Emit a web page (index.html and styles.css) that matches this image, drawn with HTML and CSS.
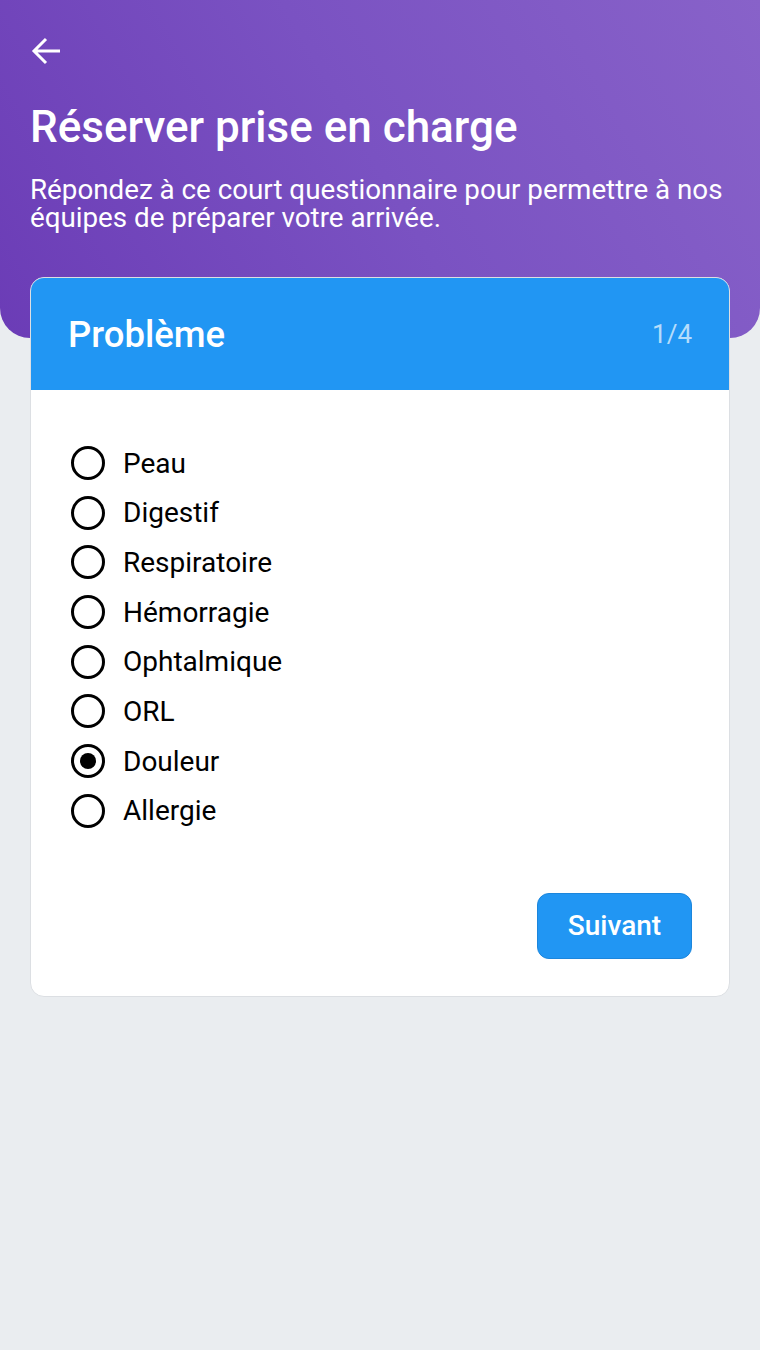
FILE: index.html
```html
<!DOCTYPE html>
<html lang="fr">

<head>
    <meta charset="UTF-8">
    <meta name="viewport" content="width=device-width, initial-scale=1.0">
    <title>Réserver prise en charge</title>
    <link rel="stylesheet" href="styles.css">
</head>

<body>
    <!-- En-tete violet -->
    <div class="hero">
        <button class="back" aria-label="Retour">
            <svg width="30" height="30" viewBox="0 0 30 30">
                <path d="M3 15H29M15 3L3 15L15 27" fill="none" stroke="#fff" stroke-width="3"/>
            </svg>
        </button>
        <h1 class="title">Réserver prise en charge</h1>
        <p class="subtitle">Répondez à ce court questionnaire pour permettre à nos équipes de préparer votre arrivée.</p>
    </div>

    <!-- Carte question -->
    <div class="card">
        <div class="card-head">
            <h2>Problème</h2>
            <span class="step">1/4</span>
        </div>
        <div class="card-body">
            <div class="options">
                <label class="option"><input type="radio" name="pb"><span>Peau</span></label>
                <label class="option"><input type="radio" name="pb"><span>Digestif</span></label>
                <label class="option"><input type="radio" name="pb"><span>Respiratoire</span></label>
                <label class="option"><input type="radio" name="pb"><span>Hémorragie</span></label>
                <label class="option"><input type="radio" name="pb"><span>Ophtalmique</span></label>
                <label class="option"><input type="radio" name="pb"><span>ORL</span></label>
                <label class="option"><input type="radio" name="pb" checked><span>Douleur</span></label>
                <label class="option"><input type="radio" name="pb"><span>Allergie</span></label>
            </div>
            <div class="actions">
                <button class="next">Suivant</button>
            </div>
        </div>
    </div>
</body>

</html>
```

FILE: styles.css
```css
body {
    margin: 0;
    background-color: #eaedf0;
    font-family: Roboto, "Liberation Sans", sans-serif;
    color: #000;
}

.hero {
    height: 338px;
    box-sizing: border-box;
    padding: 36px 30px 0 30px;
    background: linear-gradient(60deg, #6b3cb6 0%, #7a52c2 50%, #8862c9 100%);
    border-radius: 0 0 30px 30px;
    color: white;
}

.back {
    display: block;
    padding: 0;
    margin: 0 0 0 1px;
    border: none;
    background: none;
    width: 30px;
    height: 30px;
}

.title {
    margin: 33px 0 0 0;
    font-size: 44px;
    font-weight: 500;
    line-height: 56px;
}

.subtitle {
    margin: 21px 0 0 0;
    font-size: 27.75px;
    line-height: 28px;
    width: 700px;
}

.card {
    margin: -61px 30px 0 30px;
    background: white;
    border: solid 1px #dcdfe3;
    border-radius: 14px;
    overflow: hidden;
}

.card-head {
    display: flex;
    justify-content: space-between;
    align-items: center;
    height: 112px;
    padding: 0 37px;
    background-color: #2196f3;
    color: white;
}

.card-head h2 {
    margin: 0;
    font-size: 36.5px;
    font-weight: 500;
}

.step {
    font-size: 26px;
    color: #b5dcfb;
}

.card-body {
    padding: 52px 37px 37px 40px;
}

.options {
    display: flex;
    flex-direction: column;
    gap: 7.7px;
}

.option {
    display: flex;
    align-items: center;
    gap: 18px;
    height: 42px;
    font-size: 28px;
}

.option input {
    appearance: none;
    margin: 0;
    width: 34px;
    height: 34px;
    border: solid 3px #000;
    border-radius: 50%;
    display: grid;
    place-content: center;
    box-sizing: border-box;
}

.option input:checked::before {
    content: "";
    width: 16px;
    height: 16px;
    border-radius: 50%;
    background: #000;
}

.actions {
    display: flex;
    justify-content: flex-end;
    margin-top: 61px;
}

.next {
    width: 155px;
    height: 66px;
    background-color: #2196f3;
    border: solid 1px #1c86dc;
    border-radius: 12px;
    color: white;
    font-family: Roboto, "Liberation Sans", sans-serif;
    font-size: 28px;
    font-weight: 500;
}
```
